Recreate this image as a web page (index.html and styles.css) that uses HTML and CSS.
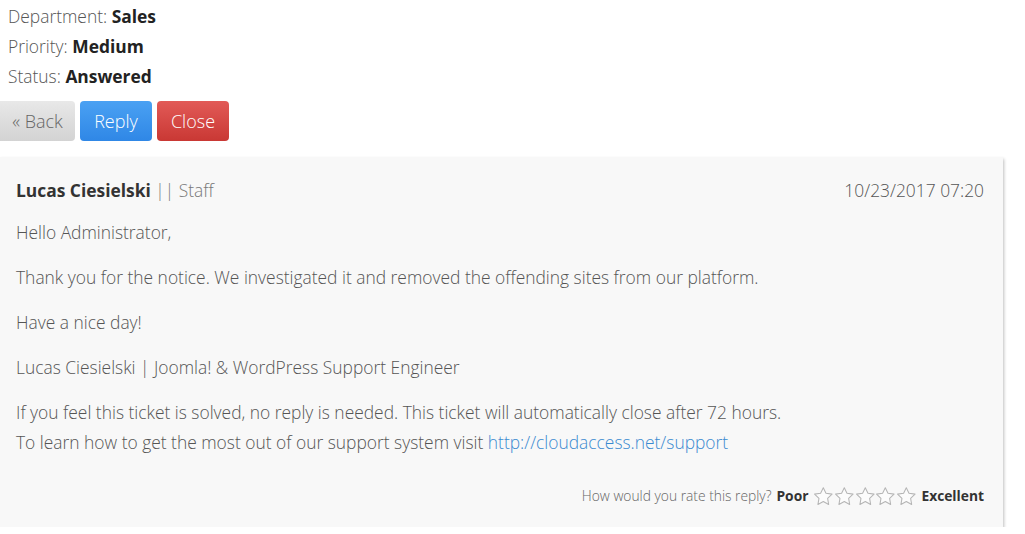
FILE: index.html
```html
<!DOCTYPE html>
<html>
<head>
<meta charset="utf-8">
<link rel="stylesheet" href="styles.css">
</head>
<body>
<div class="info">
  <div class="info-line">Department: <b>Sales</b></div>
  <div class="info-line">Priority: <b>Medium</b></div>
  <div class="info-line">Status: <b>Answered</b></div>
</div>
<div class="actions">
  <button class="btn btn-back">« Back</button>
  <button class="btn btn-reply">Reply</button>
  <button class="btn btn-close">Close</button>
</div>
<div class="card">
  <div class="card-head">
    <div class="author"><b>Lucas Ciesielski</b> <span class="role">|| Staff</span></div>
    <div class="date">10/23/2017 07:20</div>
  </div>
  <p>Hello Administrator,</p>
  <p>Thank you for the notice. We investigated it and removed the offending sites from our platform.</p>
  <p>Have a nice day!</p>
  <p>Lucas Ciesielski | Joomla! &amp; WordPress Support Engineer</p>
  <p>If you feel this ticket is solved, no reply is needed. This ticket will automatically close after 72 hours.<br>To learn how to get the most out of our support system visit <a href="#">http://cloudaccess.net/support</a></p>
  <div class="rating">
    <span>How would you rate this reply?</span>
    <b>Poor</b>
    <span class="stars">
      <svg viewBox="0 0 20 20" class="star"><path d="M10 1.5l2.6 5.4 5.9.8-4.3 4.1 1 5.9L10 14.9l-5.2 2.8 1-5.9-4.3-4.1 5.9-.8z"/></svg>
      <svg viewBox="0 0 20 20" class="star"><path d="M10 1.5l2.6 5.4 5.9.8-4.3 4.1 1 5.9L10 14.9l-5.2 2.8 1-5.9-4.3-4.1 5.9-.8z"/></svg>
      <svg viewBox="0 0 20 20" class="star"><path d="M10 1.5l2.6 5.4 5.9.8-4.3 4.1 1 5.9L10 14.9l-5.2 2.8 1-5.9-4.3-4.1 5.9-.8z"/></svg>
      <svg viewBox="0 0 20 20" class="star"><path d="M10 1.5l2.6 5.4 5.9.8-4.3 4.1 1 5.9L10 14.9l-5.2 2.8 1-5.9-4.3-4.1 5.9-.8z"/></svg>
      <svg viewBox="0 0 20 20" class="star"><path d="M10 1.5l2.6 5.4 5.9.8-4.3 4.1 1 5.9L10 14.9l-5.2 2.8 1-5.9-4.3-4.1 5.9-.8z"/></svg>
    </span>
    <b>Excellent</b>
  </div>
</div>
</body>
</html>
```
FILE: styles.css
```css
body {
  margin: 0;
  font-family: "Open Sans", "Liberation Sans", sans-serif;
  font-weight: 300;
  font-size: 17.4px;
  color: #555;
  background: #fff;
}
b { font-weight: 700; color: #222; }
.info { padding: 1px 8px 0; }
.info-line { line-height: 30px; }
.actions {
  display: flex;
  gap: 5px;
  margin-top: 10px;
}
.btn {
  font-family: inherit;
  font-weight: 300;
  font-size: 18px;
  height: 40px;
  padding: 0;
  border: none;
  border-radius: 4px;
  white-space: nowrap;
  cursor: pointer;
}
.btn-back {
  width: 75px;
  background: linear-gradient(#e8e8e8, #d3d3d3);
  color: #666;
  border-radius: 0 4px 4px 0;
}
.btn-reply {
  width: 72px;
  background: linear-gradient(#4aa1f3, #2f87e6);
  color: #fff;
}
.btn-close {
  width: 72px;
  background: linear-gradient(#e25a57, #c93834);
  color: #fff;
}
.card {
  margin-top: 16px;
  width: 968px;
  background: #f8f8f8;
  padding: 18px 19px 20px 16px;
  box-shadow: 1px 2px 3px rgba(0,0,0,0.25);
}
.card-head {
  display: flex;
  justify-content: space-between;
  line-height: 30px;
  margin-bottom: 12px;
}
.card-head b { color: #333; }
.role { color: #777; }
.date { color: #555; }
.card p {
  margin: 0 0 15px;
  line-height: 30px;
  color: #555;
}
.card a { color: #3a8ad0; text-decoration: none; }
.rating {
  display: flex;
  justify-content: flex-end;
  align-items: center;
  gap: 5px;
  font-size: 13.8px;
  color: #666;
  margin-top: 28px;
  line-height: 22px;
}
.rating b { color: #333; }
.stars { display: flex; gap: 0; }
.star {
  width: 20.6px;
  height: 21px;
  fill: #fcfcfc;
  stroke: #b5b5b5;
  stroke-width: 1;
  stroke-linejoin: round;
}
```
